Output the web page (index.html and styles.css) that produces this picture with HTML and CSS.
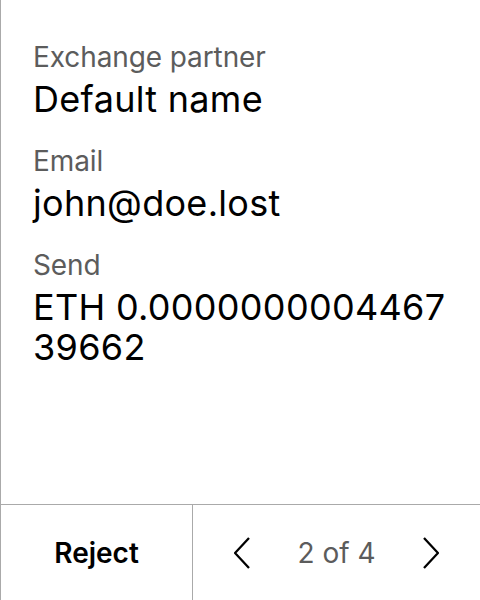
FILE: index.html
```html
<!DOCTYPE html>
<html>
<head>
<meta charset="utf-8">
<link rel="stylesheet" href="styles.css">
</head>
<body>
<div class="screen">
  <div class="content">
    <div class="field">
      <div class="label">Exchange partner</div>
      <div class="value">Default name</div>
    </div>
    <div class="field">
      <div class="label">Email</div>
      <div class="value">john@doe.lost</div>
    </div>
    <div class="field">
      <div class="label">Send</div>
      <div class="value">ETH 0.000000000446739662</div>
    </div>
  </div>
  <div class="footer">
    <div class="reject">Reject</div>
    <div class="pager">
      <svg class="chev" width="16" height="32" viewBox="0 0 16 32"><path d="M15 1 L1 16 L15 31" fill="none" stroke="#000" stroke-width="2.3"/></svg>
      <span class="count">2 of 4</span>
      <svg class="chev" width="16" height="32" viewBox="0 0 16 32"><path d="M1 1 L15 16 L1 31" fill="none" stroke="#000" stroke-width="2.3"/></svg>
    </div>
  </div>
</div>
</body>
</html>
```
FILE: styles.css
```css
html, body {
  margin: 0;
  padding: 0;
  background: #fff;
}
.screen {
  width: 480px;
  height: 600px;
  box-sizing: border-box;
  border-left: 1px solid #aaa;
  display: flex;
  flex-direction: column;
  font-family: Inter, "Noto Sans", sans-serif;
}
.content {
  flex: 1;
  padding: 39px 24px 0 32px;
  display: flex;
  flex-direction: column;
  gap: 24px;
}
.field {
  display: flex;
  flex-direction: column;
  gap: 4px;
}
.label {
  font-size: 28px;
  line-height: 36px;
  letter-spacing: -0.1px;
  color: #5c5c5c;
}
.value {
  font-size: 36px;
  line-height: 40px;
  letter-spacing: 0.3px;
  color: #000;
  word-break: break-all;
}
.footer {
  height: 95px;
  border-top: 1px solid #aaa;
  display: flex;
}
.reject {
  width: 191px;
  border-right: 1px solid #aaa;
  display: flex;
  align-items: center;
  justify-content: center;
  font-size: 28px;
  font-weight: 600;
  color: #000;
}
.pager {
  flex: 1;
  display: flex;
  align-items: center;
  justify-content: center;
  gap: 47px;
}
.count {
  font-size: 28px;
  color: #5c5c5c;
}
```
